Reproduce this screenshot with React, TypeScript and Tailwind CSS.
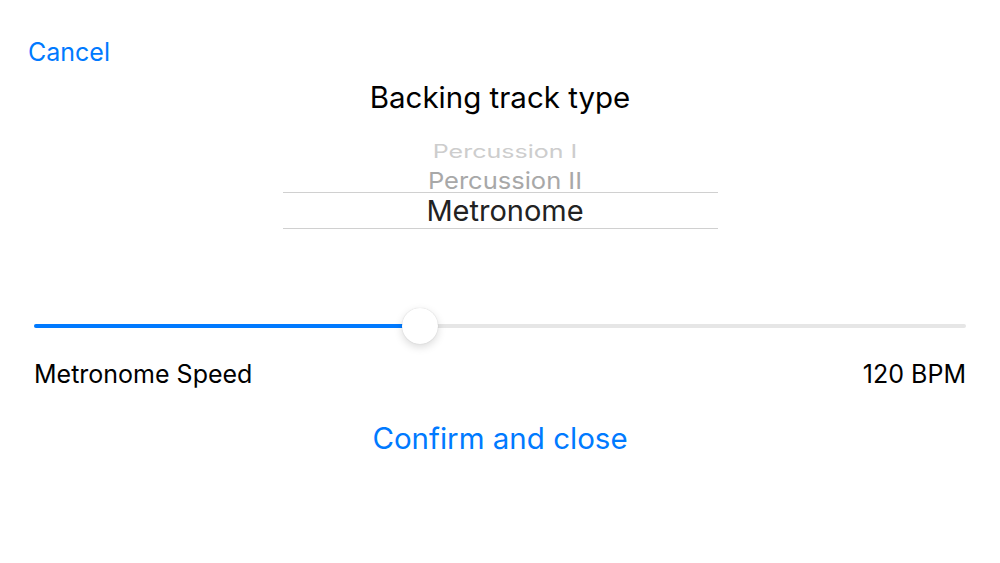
import React, { useState } from 'react';

const font = { fontFamily: 'Inter, "Noto Sans", sans-serif' };

// Wheel-style picker, showing the selected row between two hairlines
const Picker: React.FC<{ items: string[]; selected: number }> = ({ items, selected }) => {
  return (
    <div className="relative mx-auto w-[435px] h-[90px] overflow-hidden">
      <div className="absolute left-0 right-0 top-[-1px] pl-[10px] flex justify-center">
        <span className="text-[25px] leading-none text-[#cdcdcd] [transform:scaleY(0.72)]">
          {items[selected - 2]}
        </span>
      </div>
      <div className="absolute left-0 right-0 top-[28px] pl-[10px] flex justify-center">
        <span className="text-[25.5px] leading-none text-[#a8a8a8] [transform:scaleY(0.92)]">
          {items[selected - 1]}
        </span>
      </div>
      <div className="absolute left-0 right-0 top-[52px] h-[37px] pl-[10px] border-y border-[#d0d0d0] flex items-center justify-center">
        <span className="text-[29px] leading-none text-[#222]">{items[selected]}</span>
      </div>
    </div>
  );
};

const App: React.FC = () => {
  const [bpm] = useState<number>(120);
  const pct = 41.4;

  return (
    <div className="w-[1000px] h-[563px] bg-white flex flex-col" style={font}>
      <div className="pl-[28px] pt-[37px]">
        <button className="text-[25px] leading-[30px] text-[#007aff]">Cancel</button>
      </div>

      <h1 className="mt-[13px] text-center text-[29.5px] leading-[34px] text-black">Backing track type</h1>

      <div className="mt-[26px]">
        <Picker items={['Percussion I', 'Percussion II', 'Metronome']} selected={2} />
      </div>

      {/* slider */}
      <div className="mt-[78px] mx-[34px] relative h-[36px] flex items-center">
        <div className="w-full h-[4px] rounded-full bg-[#e6e6e6]">
          <div className="h-full rounded-full bg-[#007aff]" style={{ width: `${pct}%` }} />
        </div>
        <div
          className="absolute top-0 w-[36px] h-[36px] -ml-[18px] rounded-full bg-white shadow-[0_3px_8px_rgba(0,0,0,0.15),0_0_1px_rgba(0,0,0,0.2)]"
          style={{ left: `${pct}%` }}
        />
      </div>

      <div className="mt-[15px] mx-[34px] flex justify-between text-[25px] leading-[30px] text-black">
        <span>Metronome Speed</span>
        <span>{bpm} BPM</span>
      </div>

      <div className="mt-[31px] flex justify-center">
        <button className="text-[29.5px] leading-[36px] text-[#007aff]">Confirm and close</button>
      </div>
    </div>
  );
};

export default App;
